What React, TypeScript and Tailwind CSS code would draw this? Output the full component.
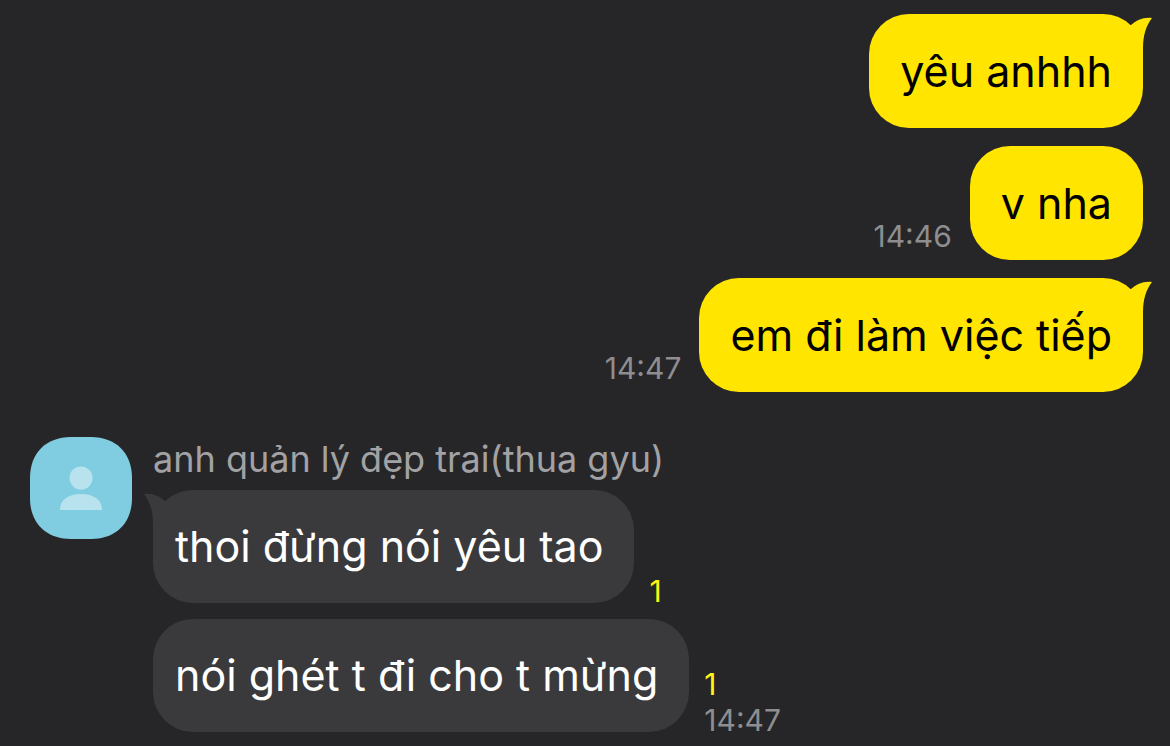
import type { ReactNode } from "react";

function Tail({ className }: { className: string }) {
  return (
    <svg viewBox="0 0 34 40" className={className} aria-hidden="true">
      <path d="M11 11C17 6 23 3 32 4C26 12 23 21 23 34V40H0V11Z" fill="currentColor" />
    </svg>
  );
}

function Time({ children }: { children: string }) {
  return <time className="text-[30px] leading-6 text-[#8e8e90]">{children}</time>;
}

function Unread() {
  return <span className="text-[30px] leading-6 text-[#fff50f]">1</span>;
}

function Sent({ text, time, tail }: { text: string; time?: string; tail?: boolean }) {
  return (
    <li className="flex items-end justify-end gap-[18px]">
      {time && (
        <div className="flex pb-3">
          <Time>{time}</Time>
        </div>
      )}
      <p className="relative rounded-[40px] bg-[#ffe500] px-[31px] py-7 text-[43px] leading-[58px] text-black">
        {tail && <Tail className="absolute top-0 -right-[11px] h-10 w-[34px] text-[#ffe500]" />}
        {text}
      </p>
    </li>
  );
}

function Received({ text, tail, children }: { text: string; tail?: boolean; children: ReactNode }) {
  return (
    <li className="flex items-end gap-[15px]">
      <p className="relative rounded-[40px] bg-[#3a3a3c] py-7 pr-[31px] pl-[22px] text-[43px] leading-[57px] text-white">
        {tail && <Tail className="absolute top-0 -left-[11px] h-10 w-[34px] -scale-x-100 text-[#3a3a3c]" />}
        {text}
      </p>
      <div className="flex flex-col items-start gap-3">{children}</div>
    </li>
  );
}

export default function App() {
  return (
    <main className="min-h-screen bg-[#262628] pt-3.5 pr-[27px] pb-3.5 pl-[30px] font-['Inter',sans-serif]">
      <ul className="flex flex-col gap-[18px]">
        <Sent text="yêu anhhh" tail />
        <Sent text="v nha" time="14:46" />
        <Sent text="em đi làm việc tiếp" time="14:47" tail />
      </ul>
      <section className="mt-[45px] flex items-start gap-[21px]">
        <svg viewBox="0 0 102 102" className="size-[102px] shrink-0" role="img" aria-label="avatar">
          <path
            d="M41 0H61C86 0 102 16 102 41V61C102 86 86 102 61 102H41C16 102 0 86 0 61V41C0 16 16 0 41 0Z"
            fill="#80cde1"
          />
          <circle cx="51" cy="41" r="11.500" fill="#b8e3ee" />
          <path d="M30 73C30 62 39 57 51 57S72 62 72 73Z" fill="#b8e3ee" />
        </svg>
        <div>
          <h2 className="mb-[9px] text-[36px] leading-[44px] text-[#a2a2a4]">anh quản lý đẹp trai(thua gyu)</h2>
          <ul className="flex flex-col gap-4">
            <Received text="thoi đừng nói yêu tao" tail>
              <Unread />
            </Received>
            <Received text="nói ghét t đi cho t mừng">
              <Unread />
              <Time>14:47</Time>
            </Received>
          </ul>
        </div>
      </section>
    </main>
  );
}
